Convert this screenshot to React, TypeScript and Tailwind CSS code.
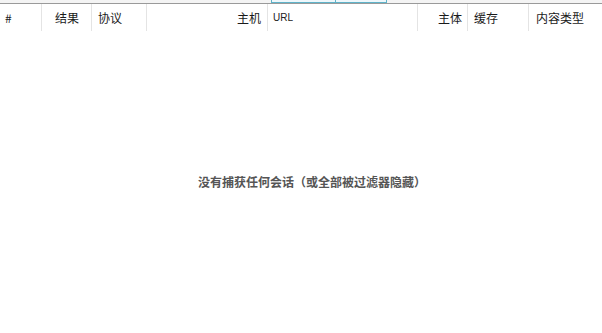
import React from "react";

const cols: { w: number; label: string; align: "left" | "right"; pad: string; url?: boolean }[] = [
  { w: 42, label: "#", align: "left", pad: "pl-[5px]" },
  { w: 50, label: "结果", align: "right", pad: "pr-[12px]" },
  { w: 55, label: "协议", align: "left", pad: "pl-[6px]" },
  { w: 121, label: "主机", align: "right", pad: "pr-[6px]" },
  { w: 150, label: "URL", align: "left", pad: "pl-[5px]", url: true },
  { w: 50, label: "主体", align: "right", pad: "pr-[5px]" },
  { w: 61, label: "缓存", align: "left", pad: "pl-[6px]" },
  { w: 73, label: "内容类型", align: "left", pad: "pl-[7px]" },
];

export default function App() {
  return (
    <div className="w-[602px] h-[333px] bg-white flex flex-col overflow-hidden" style={{ fontFamily: '"Noto Sans CJK SC", "Noto Sans", sans-serif' }}>
      <div className="h-[4px] bg-[#f4f4f4] border-b border-[#9a9a9a] flex shrink-0">
        <div className="ml-[271px] w-[116px] h-[3px] border-b border-x border-[#5fb3c9] bg-[#eef7fb] flex">
          <div className="w-[64px] border-r border-[#5fb3c9]" />
        </div>
      </div>
      <div className="flex h-[27px] shrink-0">
        {cols.map((c, i) => (
          <div
            key={i}
            style={{ width: c.w }}
            className={`flex items-center h-full ${c.align === "right" ? "justify-end" : "justify-start"} ${c.pad} ${i < cols.length - 1 ? "border-r border-[#e4e4e4]" : ""}`}
          >
            {c.url ? (
              <span className="text-[10px] text-[#222]" style={{ fontFamily: '"Liberation Sans", Arial, sans-serif' }}>{c.label}</span>
            ) : (
              <span className="text-[12px] text-[#1a1a1a] leading-none">{c.label}</span>
            )}
          </div>
        ))}
      </div>
      <div className="flex-1 flex items-center justify-center pl-[22px]">
        <span className="text-[12px] font-bold text-[#555555]">没有捕获任何会话（或全部被过滤器隐藏）</span>
      </div>
    </div>
  );
}
